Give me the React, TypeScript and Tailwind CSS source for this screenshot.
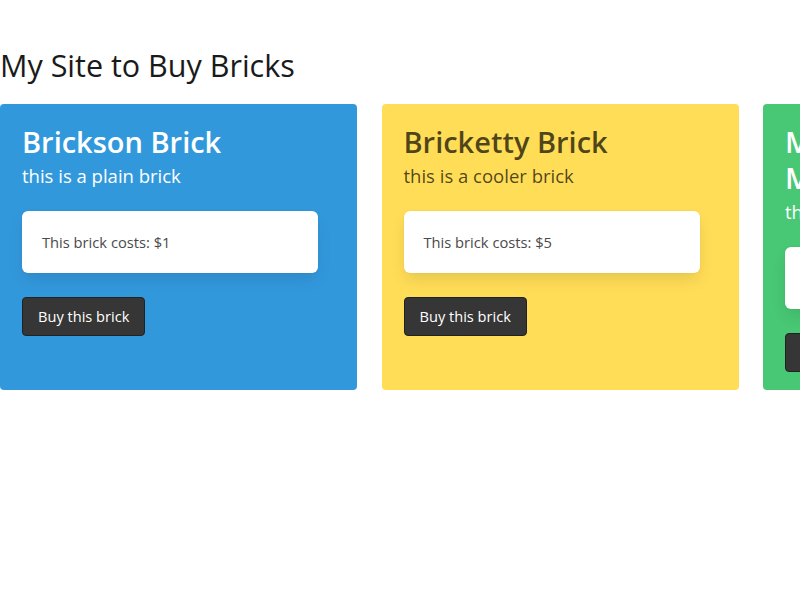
const bricks = [
  {
    name: 'Brickson Brick',
    tagline: 'this is a plain brick',
    price: 1,
    card: 'bg-[#3298dc] text-white',
  },
  {
    name: 'Bricketty Brick',
    tagline: 'this is a cooler brick',
    price: 5,
    card: 'bg-[#ffdd57] text-[rgba(0,0,0,0.7)]',
  },
  {
    name: 'Mortimer McBrickface',
    tagline: 'this is the best brick',
    price: 10,
    card: 'bg-[#48c774] text-white',
  },
];

function BrickCard({ brick }: { brick: (typeof bricks)[number] }) {
  return (
    <div className={`w-[357px] shrink-0 rounded pt-5 pb-[18px] pl-[22px] pr-10 ${brick.card}`}>
      <h2 className="text-[29px] leading-[36px] font-semibold">{brick.name}</h2>
      <p className="text-[18.5px] leading-[25px] mt-[3px]">{brick.tagline}</p>
      <div className="mt-[23px] w-[296px] rounded-md bg-white px-5 py-[19px] text-[14.7px] leading-6 text-[#4a4a4a] shadow-[0_8px_16px_-2px_rgba(10,10,10,0.1),0_0_0_1px_rgba(10,10,10,0.02)]">
        This brick costs: ${brick.price}
      </div>
      <button className="mt-6 h-[39px] rounded border border-[#222] bg-[#363636] px-[15px] text-[14.6px] font-medium text-white">
        Buy this brick
      </button>
    </div>
  );
}

export default function App() {
  return (
    <div className="h-[600px] w-[800px] overflow-hidden bg-white font-['Open_Sans',sans-serif]">
      <h1 className="pt-[45px] text-[30.5px] leading-10 text-[#1a1a1a]">My Site to Buy Bricks</h1>
      <div className="mt-[19px] flex items-stretch gap-x-[24.5px]">
        {bricks.map((b) => (
          <BrickCard key={b.name} brick={b} />
        ))}
      </div>
    </div>
  );
}
